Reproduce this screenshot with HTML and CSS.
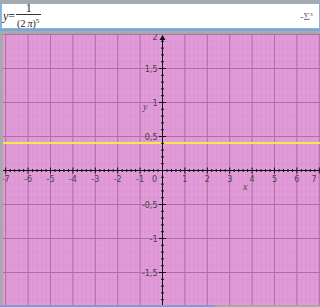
FILE: index.html
```html
<!DOCTYPE html>
<html>
<head>
<meta charset="utf-8">
<link rel="stylesheet" href="styles.css">
</head>
<body>
<div class="app">
  <div class="input-bar">
    <div class="formula">
      <span class="var">y</span><span class="eq">=</span>
      <span class="frac">
        <span class="num">1</span>
        <span class="den">(2&#8201;<i>π</i>)<sup>5</sup></span>
      </span>
    </div>
    <div class="sigma">-Σ<sup>x</sup></div>
  </div>
  <div class="sep"></div>
  <div class="plot-wrap">
    <svg id="plot" class="plot" width="317" height="271" viewBox="3 35 317 271"></svg>
  </div>
  <div class="bottom">
    <div class="bottom-blue"></div>
  </div>
</div>
<script src="plot.js"></script>
</body>
</html>
```
FILE: styles.css
```css
html, body {
  margin: 0;
  padding: 0;
  background: #a9a9a9;
  width: 320px;
  height: 307px;
  overflow: hidden;
}
.app {
  display: flex;
  flex-direction: column;
  width: 320px;
  height: 307px;
}
.input-bar {
  margin-top: 3px;
  height: 24px;
  background: #ffffff;
  border: 1px solid #88b4dc;
  border-left-width: 2px;
  display: flex;
  align-items: center;
  justify-content: space-between;
  font-family: "Liberation Serif", serif;
  color: #222;
}
.formula {
  display: flex;
  align-items: center;
  font-size: 12px;
  margin-left: 1px;
}
.var { font-style: italic; }
.frac {
  display: inline-flex;
  flex-direction: column;
  align-items: center;
  margin-left: 1px;
  line-height: 11px;
}
.num {
  display: block;
  border-bottom: 1px solid #333;
  width: 100%;
  text-align: center;
  font-size: 12px;
  padding-bottom: 0;
}
.den {
  display: block;
  font-size: 10px;
  padding: 1px 2px 0 1px;
}
.den sup { font-size: 7px; vertical-align: 4px; }
.sigma {
  font-size: 11px;
  color: #777;
  margin-right: 6px;
}
.sigma sup { font-size: 6px; vertical-align: 4px; }
.sep {
  height: 4px;
  border-top: 2px solid #7aa6d6;
  background: #a9a9a9;
}
.plot-wrap {
  display: flex;
  padding-left: 3px;
  height: 271px;
}
.plot { display: block; }
.bottom {
  height: 2px;
  display: flex;
}
.bottom-blue {
  width: 215px;
  background: #7e9cd8;
}
.lbl {
  font-family: "DejaVu Sans", sans-serif;
  font-size: 8px;
  fill: #444;
}
.axis-name {
  font-family: "Liberation Serif", serif;
  font-style: italic;
  font-size: 10px;
  fill: #444;
}
```
FILE: plot.js
```js
(function () {
  var svg = document.getElementById('plot');
  var NS = 'http://www.w3.org/2000/svg';
  var ox = 162.5, oy = 171.5, ux = 22.4, uy = 68;
  var x0 = 3, x1 = 320, y0 = 35, y1 = 306;
  function el(tag, attrs, text) {
    var e = document.createElementNS(NS, tag);
    for (var k in attrs) e.setAttribute(k, attrs[k]);
    if (text !== undefined) e.textContent = text;
    svg.appendChild(e);
    return e;
  }
  el('rect', { x: x0, y: y0, width: x1 - x0, height: y1 - y0, fill: '#e29bd9' });
  var i, x, y;
  for (i = -40; i <= 40; i++) {
    x = ox + i * ux / 5;
    if (x < x0 || x > x1) continue;
    el('line', { x1: x, y1: y0, x2: x, y2: y1, stroke: '#d892cf', 'stroke-width': 0.6 });
  }
  for (i = -25; i <= 25; i++) {
    y = oy + i * uy / 10;
    if (y < y0 || y > y1) continue;
    el('line', { x1: x0, y1: y, x2: x1, y2: y, stroke: '#d892cf', 'stroke-width': 0.6 });
  }
  for (i = -8; i <= 8; i++) {
    x = ox + i * ux;
    if (x < x0 || x > x1) continue;
    el('line', { x1: x, y1: y0, x2: x, y2: y1, stroke: '#b06ca8', 'stroke-width': 1 });
  }
  for (i = -5; i <= 5; i++) {
    y = oy + i * uy / 2;
    if (y < y0 || y > y1) continue;
    el('line', { x1: x0, y1: y, x2: x1, y2: y, stroke: '#b06ca8', 'stroke-width': 1 });
  }
  el('line', { x1: x0, y1: 144, x2: x1, y2: 144, stroke: '#f4e84a', 'stroke-width': 2 });
  el('line', { x1: x0, y1: oy, x2: x1, y2: oy, stroke: '#111', 'stroke-width': 1 });
  el('line', { x1: ox, y1: y0 + 2, x2: ox, y2: y1, stroke: '#111', 'stroke-width': 1 });
  el('path', { d: 'M' + (ox - 3) + ' ' + (y0 + 6) + ' L' + ox + ' ' + (y0 + 1) + ' L' + (ox + 3) + ' ' + (y0 + 6) + ' Z', fill: '#111' });
  for (i = -40; i <= 40; i++) {
    x = ox + i * ux / 5;
    if (x < x0 || x > x1 || i === 0) continue;
    var big = i % 5 === 0;
    el('line', { x1: x, y1: oy - (big ? 3 : 1.5), x2: x, y2: oy + (big ? 3 : 1.5), stroke: '#111', 'stroke-width': 1 });
  }
  for (i = -20; i <= 20; i++) {
    y = oy + i * uy / 10;
    if (y < y0 + 5 || y > y1 || i === 0) continue;
    var bigY = i % 5 === 0;
    el('line', { x1: ox - (bigY ? 3.5 : 1.5), y1: y, x2: ox + (bigY ? 3.5 : 1.5), y2: y, stroke: '#111', 'stroke-width': 1 });
  }
  for (i = -7; i <= 7; i++) {
    if (i === 0) continue;
    x = ox + i * ux;
    if (i === 7) x = 314;
    el('text', { x: x, y: oy + 11, 'text-anchor': 'middle', 'class': 'lbl' }, i < 0 ? '-' + (-i) : String(i));
  }
  el('text', { x: ox - 8, y: oy + 11, 'text-anchor': 'middle', 'class': 'lbl' }, '0');
  var ys = [[1.5, '1,5'], [1, '1'], [0.5, '0,5'], [-0.5, '-0,5'], [-1, '-1'], [-1.5, '-1,5']];
  ys.forEach(function (p) {
    y = oy - p[0] * uy;
    el('text', { x: ox - 5, y: y + 3, 'text-anchor': 'end', 'class': 'lbl' }, p[1]);
  });
  el('text', { x: ox - 5, y: y0 + 6, 'text-anchor': 'end', 'class': 'lbl', 'font-size': 6 }, '2');
  el('text', { x: 143, y: 111, 'class': 'axis-name' }, 'y');
  el('text', { x: 243, y: 191, 'class': 'axis-name' }, 'x');
})();
```
